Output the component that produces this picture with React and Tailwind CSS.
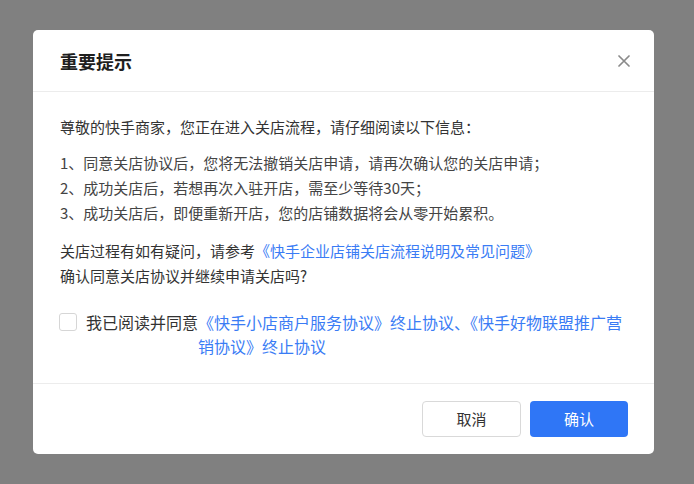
export default function App() {
  const font = { fontFamily: '"Noto Sans CJK SC", "Noto Sans", sans-serif' }
  return (
    <div className="w-[694px] h-[484px] bg-[#808080] pt-[30px] pl-[33px] overflow-hidden" style={font}>
      <div className="w-[621px] h-[424px] bg-white rounded-[5px] flex flex-col overflow-hidden">
        {/* header */}
        <div className="h-[62px] shrink-0 flex items-center justify-between pl-[27px] pr-[22px] border-b border-[#ececec]">
          <h2 className="text-[18px] font-bold text-[#1f1f1f] leading-none">重要提示</h2>
          <button className="w-[16px] h-[16px] flex items-center justify-center text-[#8a8a8a]">
            <svg width="12" height="12" viewBox="0 0 12 12" fill="none" stroke="currentColor" strokeWidth="1.7" strokeLinecap="round">
              <path d="M1 1L11 11M11 1L1 11" />
            </svg>
          </button>
        </div>

        {/* body */}
        <div className="flex-1 px-[27px] pt-[22px] text-[15px] leading-[25px] text-[#333]">
          <p>尊敬的快手商家，您正在进入关店流程，请仔细阅读以下信息：</p>
          <div className="mt-[11px] text-[#444]">
            <p>1、同意关店协议后，您将无法撤销关店申请，请再次确认您的关店申请；</p>
            <p>2、成功关店后，若想再次入驻开店，需至少等待30天；</p>
            <p>3、成功关店后，即便重新开店，您的店铺数据将会从零开始累积。</p>
          </div>
          <div className="mt-[13px]">
            <p>
              关店过程有如有疑问，请参考<span className="text-[#3a7cf5]">《快手企业店铺关店流程说明及常见问题》</span>
            </p>
            <p>确认同意关店协议并继续申请关店吗?</p>
          </div>
          <div className="mt-[22px] -ml-[1px] flex items-start text-[16px] leading-[24px]">
            <span className="mt-[3px] w-[18px] h-[18px] shrink-0 rounded-[3px] border border-[#d6d6d6] bg-white"></span>
            <span className="ml-[9px] shrink-0">我已阅读并同意</span>
            <span className="text-[#3a7cf5] whitespace-nowrap">
              《快手小店商户服务协议》终止协议、《快手好物联盟推广营
              <br />
              销协议》终止协议
            </span>
          </div>
        </div>

        {/* footer */}
        <div className="h-[71px] shrink-0 border-t border-[#ececec] flex items-center justify-end gap-[9px] pr-[26px]">
          <button className="w-[99px] h-[36px] rounded-[4px] border border-[#d9d9d9] bg-white text-[15px] text-[#333]">取消</button>
          <button className="w-[98px] h-[36px] rounded-[4px] bg-[#2f76f6] text-[15px] text-white">确认</button>
        </div>
      </div>
    </div>
  )
}
